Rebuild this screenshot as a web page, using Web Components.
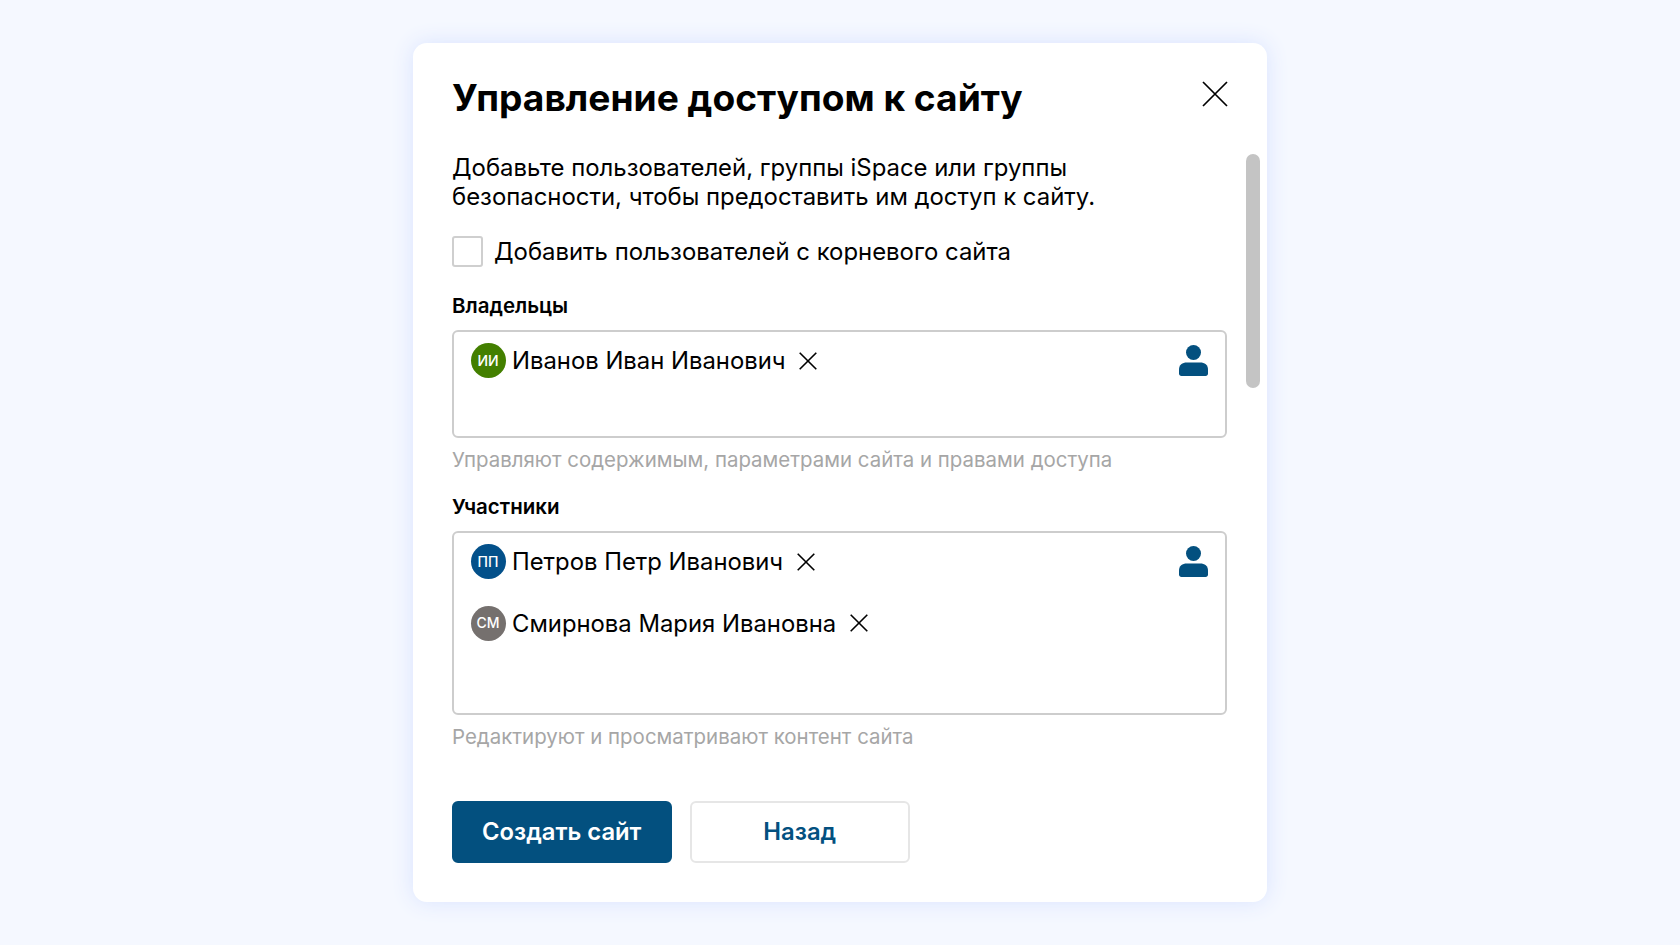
<!DOCTYPE html>
<html lang="ru">
<head>
<meta charset="utf-8">
<title>Управление доступом к сайту</title>
<style>
  html, body { margin: 0; height: 100%; }
  body {
    background: #f5f8ff;
    font-family: Inter, "Noto Sans", sans-serif;
    color: #000;
    display: flex;
    align-items: center;
    justify-content: center;
    height: 945px;
    overflow: hidden;
  }
</style>
</head>
<body>

<access-dialog heading="Управление доступом к сайту">
  <p slot="intro">Добавьте пользователей, группы iSpace или группы<br>безопасности, чтобы предоставить им доступ к сайту.</p>
  <root-checkbox slot="fields">Добавить пользователей с корневого сайта</root-checkbox>
  <people-field slot="fields" label="Владельцы" hint="Управляют содержимым, параметрами сайта и правами доступа" box-height="108">
    <person-chip initials="ИИ" color="#437f00">Иванов Иван Иванович</person-chip>
  </people-field>
  <people-field slot="fields" label="Участники" hint="Редактируют и просматривают контент сайта" box-height="184">
    <person-chip initials="ПП" color="#03508a">Петров Петр Иванович</person-chip>
    <person-chip initials="СМ" color="#75706e">Смирнова Мария Ивановна</person-chip>
  </people-field>
  <app-button slot="actions" kind="primary">Создать сайт</app-button>
  <app-button slot="actions">Назад</app-button>
</access-dialog>

<script>
class RootCheckbox extends HTMLElement {
  constructor() {
    super();
    this.attachShadow({ mode: 'open' });
    this.shadowRoot.innerHTML = `
      <style>
        :host { display: flex; align-items: center; gap: 11px; height: 31px; margin-bottom: 4px; font-size: 23.9px; line-height: 29px; }
        .box { width: 27px; height: 27px; border: 2px solid #cfcfcf; border-radius: 3px; background: #fff; flex: none; }
      </style>
      <span class="box"></span>
      <span><slot></slot></span>
    `;
  }
}
customElements.define('root-checkbox', RootCheckbox);

class PersonChip extends HTMLElement {
  constructor() {
    super();
    const initials = this.getAttribute('initials');
    const color = this.getAttribute('color');
    this.attachShadow({ mode: 'open' });
    this.shadowRoot.innerHTML = `
      <style>
        :host { display: flex; align-items: center; height: 35px; font-size: 23.85px; line-height: 29px; }
        .avatar {
          width: 35px; height: 35px; border-radius: 50%; flex: none;
          background: ${color}; color: #fff;
          display: flex; align-items: center; justify-content: center;
          font-size: 14px; font-weight: 500; line-height: 1;
          margin-right: 6.5px;
        }
        svg { margin-left: 13.5px; flex: none; display: block; }
      </style>
      <span class="avatar">${initials}</span>
      <span><slot></slot></span>
      <svg width="18" height="18" viewBox="0 0 18 18" fill="none" stroke="#000" stroke-width="1.6">
        <path d="M0.7 0.7 17.3 17.3M17.3 0.7 0.7 17.3"/>
      </svg>
    `;
  }
}
customElements.define('person-chip', PersonChip);

class PeopleField extends HTMLElement {
  constructor() {
    super();
    this.attachShadow({ mode: 'open' });
    this.shadowRoot.innerHTML = `
      <style>
        :host { display: block; }
        .label { font-size: 20.5px; font-weight: 600; line-height: 24px; margin-bottom: 12px; }
        .box {
          box-sizing: border-box;
          height: ${this.getAttribute('box-height')}px;
          border: 2px solid #cdcdcd;
          border-radius: 6px;
          padding: 11px 17px 0 16.5px;
          display: flex;
          justify-content: space-between;
          align-items: flex-start;
        }
        .people { display: flex; flex-direction: column; gap: 26.5px; }
        svg { display: block; flex: none; margin-top: 2px; }
        .hint { font-size: 20.45px; line-height: 24px; color: #a6a6a6; margin-top: 10px; }
      </style>
      <div class="label">${this.getAttribute('label')}</div>
      <div class="box">
        <div class="people"><slot></slot></div>
        <svg width="29" height="31" viewBox="0 0 29 31">
          <circle cx="14.5" cy="7.5" r="7.5" fill="#03507f"/>
          <path d="M0 24.5C0 20 3.2 17.5 8 17.5H21C25.8 17.5 29 20 29 24.5V28.5C29 29.9 28 31 26.6 31H2.4C1 31 0 29.9 0 28.5Z" fill="#03507f"/>
        </svg>
      </div>
      <div class="hint">${this.getAttribute('hint')}</div>
    `;
  }
}
customElements.define('people-field', PeopleField);

class AppButton extends HTMLElement {
  constructor() {
    super();
    this.attachShadow({ mode: 'open' });
    this.shadowRoot.innerHTML = `
      <style>
        :host {
          display: flex; align-items: center; justify-content: center;
          box-sizing: border-box; width: 219.5px; height: 62px;
          border-radius: 6px; font-size: 23.8px; font-weight: 600;
          border: 2px solid #e6e6e6; background: #fff; color: #03507f;
          padding-bottom: 1px;
        }
        :host([kind="primary"]) { background: #03507f; border-color: #03507f; color: #fff; }
      </style>
      <slot></slot>
    `;
  }
}
customElements.define('app-button', AppButton);

class AccessDialog extends HTMLElement {
  constructor() {
    super();
    this.attachShadow({ mode: 'open' });
    this.shadowRoot.innerHTML = `
      <style>
        :host {
          display: flex; flex-direction: column;
          box-sizing: border-box; width: 854px; height: 859px;
          background: #fff; border-radius: 14px;
          box-shadow: 0 0 22px #d9e3ff;
          padding: 32px 7px 39px 39px;
        }
        header { display: flex; justify-content: space-between; align-items: flex-start; height: 78px; padding-right: 32px; }
        h1 { margin: 0; font-size: 37.15px; font-weight: 700; line-height: 46px; }
        header svg { display: block; margin-top: 6px; flex: none; }
        .scroller { display: flex; gap: 19px; flex: 1; min-height: 0; }
        .content { width: 775px; flex: none; }
        .thumb { width: 14px; height: 234px; margin-top: 1px; border-radius: 7px; background: #c4c4c4; flex: none; }
        ::slotted(p) { margin: 0 0 25px; font-size: 23.9px; line-height: 29px; }
        .fields { display: flex; flex-direction: column; gap: 23px; }
        .actions { display: flex; gap: 18.5px; }
      </style>
      <header>
        <h1>${this.getAttribute('heading')}</h1>
        <svg width="26" height="26" viewBox="0 0 26 26" fill="none" stroke="#000" stroke-width="1.7">
          <path d="M1 1 25 25M25 1 1 25"/>
        </svg>
      </header>
      <div class="scroller">
        <div class="content">
          <slot name="intro"></slot>
          <div class="fields"><slot name="fields"></slot></div>
        </div>
        <div class="thumb"></div>
      </div>
      <div class="actions"><slot name="actions"></slot></div>
    `;
  }
}
customElements.define('access-dialog', AccessDialog);
</script>
</body>
</html>
